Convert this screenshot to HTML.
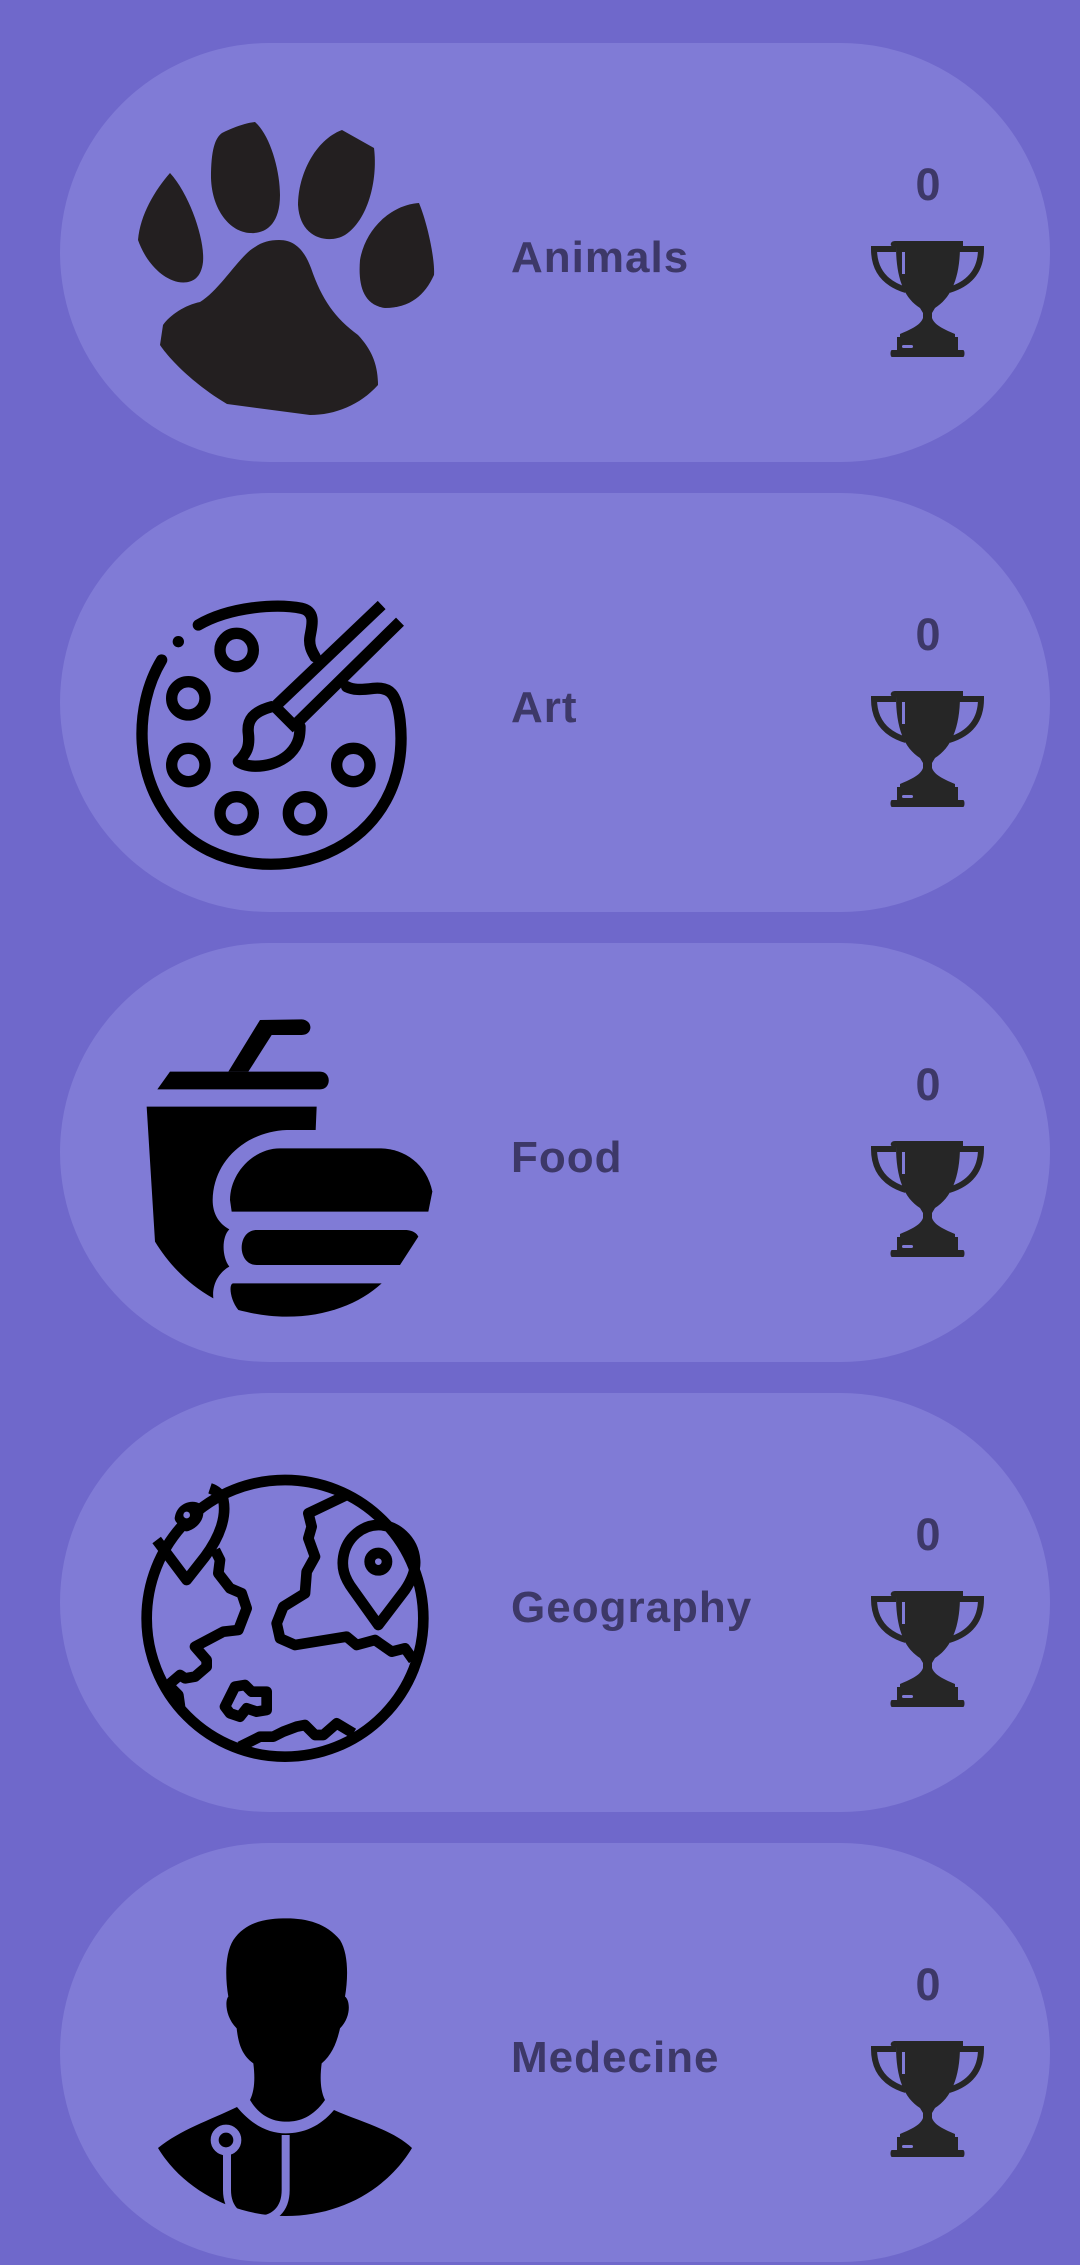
<!DOCTYPE html>
<html><head><meta charset="utf-8"><style>
html,body{margin:0;padding:0}
body{width:1080px;height:2265px;background:#6f68cb;position:relative;overflow:hidden;font-family:"Liberation Sans",sans-serif}
.card{position:absolute;left:60px;width:990px;height:419px;border-radius:210px;background:#807bd6}
.lbl{position:absolute;left:451px;top:190px;font-size:44px;font-weight:bold;color:#3d3868;line-height:50px;letter-spacing:1px}
.num{position:absolute;left:838px;width:60px;text-align:center;top:117px;font-size:45px;font-weight:bold;color:#3d3868;line-height:50px}
.tro{position:absolute;left:811px;top:195px}
svg{position:absolute;overflow:visible}
</style></head><body>

<svg width="0" height="0" style="position:absolute"><defs>
<g id="trophy">
<path fill="#262626" d="M24,3 L92,3 L92,8 L89,8 C89,40 80,60 64,70 L61,75 L61,80 C64,88 75,92 84,96 L84,99 L87,99 L87,112 L92,112 C94,112 94,119 92,119 L21,119 C19,119 19,112 21,112 L26,112 L26,99 L29,99 L29,96 C38,92 49,88 52,80 L52,75 L49,70 C33,60 25,40 25,8 L21,8 C19,8 19,3 24,3 Z"/>
<path fill="none" stroke="#262626" stroke-width="6" d="M25,11 L3,11 C3,30 12,45 35,52 M88,11 L110,11 C110,30 101,45 78,52"/>
<rect x="31" y="14" width="3" height="22" fill="#807bd6"/>
<rect x="31" y="107" width="11" height="3" rx="1.5" fill="#807bd6"/>
</g></defs></svg>

<div class="card" style="top:43px"><div class="lbl">Animals</div><div class="num">0</div><svg class="tro" width="113" height="119" viewBox="0 0 113 119"><use href="#trophy"/></svg></div>
<div class="card" style="top:493px"><div class="lbl">Art</div><div class="num">0</div><svg class="tro" width="113" height="119" viewBox="0 0 113 119"><use href="#trophy"/></svg></div>
<div class="card" style="top:943px"><div class="lbl">Food</div><div class="num">0</div><svg class="tro" width="113" height="119" viewBox="0 0 113 119"><use href="#trophy"/></svg></div>
<div class="card" style="top:1393px"><div class="lbl">Geography</div><div class="num">0</div><svg class="tro" width="113" height="119" viewBox="0 0 113 119"><use href="#trophy"/></svg></div>
<div class="card" style="top:1843px"><div class="lbl">Medecine</div><div class="num">0</div><svg class="tro" width="113" height="119" viewBox="0 0 113 119"><use href="#trophy"/></svg></div>

<!-- Paw -->
<svg style="left:0;top:0" width="1080" height="500" viewBox="0 0 1080 500">
<g fill="#231f20">
<path d="M170,173 C190,195 205,240 203,262 C201,280 190,284 178,282 C160,278 145,260 138,240 C140,215 155,190 170,173 Z"/>
<path d="M255,122 C270,135 280,170 280,195 C280,225 265,234 250,233 C230,232 212,210 211,178 C211,150 215,138 222,133 C232,128 245,123 255,122 Z"/>
<path d="M342,130 L374,148 C378,180 368,220 345,235 C330,244 300,240 298,205 C298,175 315,140 342,130 Z"/>
<path d="M419,203 C428,225 435,260 434,275 C425,295 410,308 385,308 C363,305 358,285 360,260 C365,230 390,205 419,203 Z"/>
<path d="M279,240 C298,240 306,255 311,268 C322,300 335,318 358,335 C372,350 378,365 378,385 C360,405 335,415 310,415 L227,404 C195,385 170,360 160,345 L163,325 C170,315 185,305 200,302 C220,290 240,255 255,247 C262,242 270,240 279,240 Z"/>
</g></svg>

<!-- Art -->
<svg style="left:120px;top:580px" width="330" height="310" viewBox="0 0 990 930">
<g fill="none" stroke="#000" stroke-width="34" stroke-linecap="round" stroke-linejoin="round">
<path d="M125,240 C40,380 40,600 170,740 C280,860 480,880 620,820 C780,750 860,600 840,420 C830,340 810,320 760,325 C720,330 700,330 680,320"/>
<path d="M235,135 C330,80 470,70 545,85 C590,95 575,140 570,170 C565,200 580,220 585,230"/>
<circle cx="350" cy="210" r="50"/><circle cx="205" cy="355" r="50"/><circle cx="205" cy="555" r="50"/>
<circle cx="350" cy="700" r="50"/><circle cx="555" cy="700" r="50"/><circle cx="700" cy="555" r="50"/>
<path stroke-linecap="butt" d="M785,75 L470,375 M840,125 L530,430 M465,380 L530,445"/>
<path d="M455,380 C400,395 380,420 385,460 C390,500 380,520 355,545 C390,570 470,560 510,520 C540,490 540,460 540,440"/>
</g>
<circle cx="175" cy="185" r="17" fill="#000"/>
</svg>

<!-- Food -->
<svg style="left:120px;top:1000px" width="330" height="330" viewBox="0 0 990 990">
<g fill="#000">
<path d="M420,60 L545,58 C580,60 580,105 545,105 L455,105 L385,215 L325,215 Z"/>
<path d="M150,215 L600,215 C635,215 635,268 600,268 L112,268 Z"/>
<path d="M80,320 L590,320 L587,390 L500,390 C380,395 280,480 278,600 C278,640 295,670 328,688 C305,710 305,770 328,800 C300,815 275,850 280,895 C200,850 145,790 105,725 Z"/>
<path d="M335,635 L925,635 L937,575 C920,490 850,445 780,445 L480,445 C400,445 330,520 330,600 Z"/>
<path d="M410,690 L860,690 C880,692 890,700 895,710 L840,795 L410,795 C350,795 350,690 410,690 Z"/>
<path d="M340,850 L785,850 C720,910 620,950 500,950 C440,950 395,940 355,930 C330,900 325,850 340,850 Z"/>
</g></svg>

<!-- Geography -->
<svg style="left:120px;top:1460px" width="330" height="320" viewBox="0 0 990 960">
<g fill="none" stroke="#000" stroke-width="32" stroke-linejoin="round">
<circle cx="495" cy="475" r="415"/>
<path d="M110,240 L200,360 L255,290 C300,230 320,170 310,120 C300,100 285,90 270,85"/>
<path d="M180,175 C185,145 215,135 232,145 C240,170 222,190 200,198 Z"/>
<path d="M285,270 L300,300 L295,340 L330,385 L365,400 L380,445 L355,510 L310,515 L225,560 L260,600 L260,620 L225,650 L195,655 L180,645 L145,675 L175,705 L180,740"/>
<path d="M680,105 L565,160 L575,200 L565,235 L585,290 L560,335 L555,400 L490,440 L470,490 L480,535 L525,555 L680,530 L710,555 L765,540 L815,575 L855,565 L880,600"/>
<path d="M775,495 L700,390 C670,350 665,320 670,290 C680,230 730,195 775,195 C830,195 880,240 885,300 C888,330 875,360 855,390 Z"/>
<circle cx="775" cy="305" r="26"/>
<path d="M315,740 L345,680 L375,675 L395,695 L440,695 L440,750 L410,755 L380,745 L360,770 L330,760 Z"/>
<path d="M360,860 L420,830 L460,830 L490,815 L530,800 L555,795 L585,825 L610,825 L650,790 L700,820"/>
</g>
<circle cx="200" cy="165" r="10" fill="#807bd6"/>
</svg>

<!-- Medicine -->
<svg style="left:140px;top:1900px" width="290" height="330" viewBox="0 0 870 990">
<g fill="#000">
<path d="M265,290 C255,230 255,160 280,120 C320,60 390,55 440,55 C500,55 560,70 600,120 C625,160 625,230 615,290 C630,300 635,350 600,385 C590,430 575,465 545,490 C540,530 540,570 555,600 C520,650 480,665 440,665 C400,665 360,650 330,600 C345,570 345,530 340,490 C305,465 295,430 290,385 C255,350 255,300 265,290 Z"/>
<path d="M54,744 C120,690 210,660 291,621 C340,680 390,700 437,700 C490,700 540,680 582,630 C660,665 760,690 816,744 C740,870 600,948 437,948 C280,948 130,870 54,744 Z"/>
</g>
<g fill="none" stroke="#807bd6" stroke-width="24">
<path d="M437,705 L437,870 C437,930 400,960 350,960 C300,960 261,930 261,870 L261,755"/>
<circle cx="258" cy="720" r="34"/>
</g>
</svg>

</body></html>
